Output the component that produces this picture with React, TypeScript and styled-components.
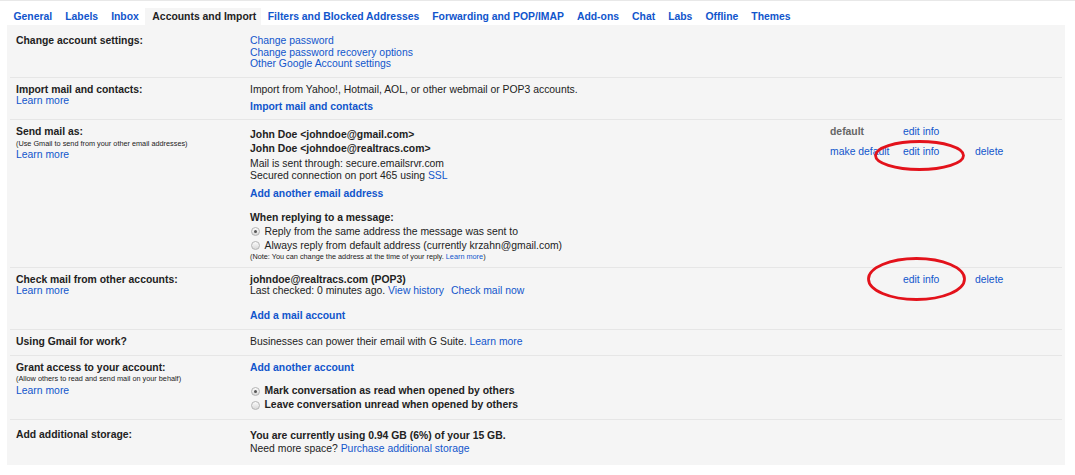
import React from 'react';
import styled, { createGlobalStyle } from 'styled-components';

const GlobalStyle = createGlobalStyle`
  html, body {
    margin: 0;
    padding: 0;
    background: #fff;
  }
  body {
    font-family: 'Liberation Sans', Arial, sans-serif;
    font-size: 10.4px;
    line-height: 11.6px;
    color: #222;
  }
`;

const Page = styled.div`
  border-top: 1px solid #e8e8e8;
  padding: 7px 10px 10px 7px;
`;

const TabBar = styled.nav`
  display: flex;
`;

const Tab = styled.a<{ $active?: boolean }>`
  display: block;
  height: 17px;
  line-height: 17px;
  padding-left: ${(p) => (p.$active ? '7px' : '6.5px')};
  padding-right: ${(p) => (p.$active ? '5px' : '6.5px')};
  font-weight: bold;
  color: ${(p) => (p.$active ? '#222' : '#15c')};
  background: ${(p) => (p.$active ? '#f5f5f5' : 'transparent')};
  text-decoration: none;
  white-space: nowrap;
`;

const Panel = styled.div`
  width: 1058px;
  background: #f5f5f5;
`;

const Row = styled.div<{ $pt?: number; $pb?: number; $last?: boolean }>`
  display: grid;
  grid-template-columns: 240px 1fr;
  margin: 0 3px;
  padding: ${(p) => p.$pt ?? 6}px 0 ${(p) => p.$pb ?? 7}px;
  border-bottom: ${(p) => (p.$last ? 'none' : '1px solid #e6e6e6')};
`;

const Label = styled.div`
  padding-left: 6px;
`;

const Title = styled.div`
  font-weight: bold;
`;

const Small = styled.div<{ $mt?: number }>`
  font-size: 7.3px;
  line-height: 9.5px;
  margin-top: ${(p) => p.$mt ?? 0}px;
  white-space: nowrap;
`;

const Content = styled.div``;

const Line = styled.div<{ $mt?: number; $pt?: number; $lh?: number; $bold?: boolean }>`
  margin-top: ${(p) => p.$mt ?? 0}px;
  padding-top: ${(p) => p.$pt ?? 0}px;
  line-height: ${(p) => p.$lh ?? 11.6}px;
  font-weight: ${(p) => (p.$bold ? 'bold' : 'normal')};
  white-space: nowrap;
`;

const Link = styled.a<{ $bold?: boolean; $gap?: number }>`
  color: #15c;
  text-decoration: none;
  font-weight: ${(p) => (p.$bold ? 'bold' : 'normal')};
  margin-left: ${(p) => p.$gap ?? 0}px;
  cursor: pointer;
`;

const AccountRow = styled.div`
  display: grid;
  grid-template-columns: 580px 73px 72px 1fr;
`;

const Action = styled.div<{ $pt?: number }>`
  padding-top: ${(p) => p.$pt ?? 0}px;
  white-space: nowrap;
`;

const DefaultTag = styled.span`
  font-weight: bold;
  color: #666;
`;

const Circled = styled.span`
  position: relative;
  display: inline-block;
`;

const Mark = styled.svg<{ $x: number; $y: number }>`
  position: absolute;
  left: ${(p) => p.$x}px;
  top: ${(p) => p.$y}px;
  overflow: visible;
  pointer-events: none;
`;

const RadioLine = styled.label<{ $bold?: boolean; $mt?: number }>`
  display: flex;
  align-items: center;
  gap: 5px;
  height: 14px;
  margin-top: ${(p) => p.$mt ?? 0}px;
  font-weight: ${(p) => (p.$bold ? 'bold' : 'normal')};
  white-space: nowrap;
`;

const RadioDot = styled.span<{ $checked?: boolean }>`
  position: relative;
  flex: none;
  width: 9px;
  height: 9px;
  box-sizing: border-box;
  border-radius: 50%;
  border: 1px solid #b4b4b4;
  background: linear-gradient(#fbfbfb, #d8d8d8);
  margin-left: 0.5px;

  &::after {
    content: '';
    display: ${(p) => (p.$checked ? 'block' : 'none')};
    position: absolute;
    left: 2px;
    top: 2px;
    width: 3px;
    height: 3px;
    border-radius: 50%;
    background: #555;
  }
`;

const Ellipse: React.FC<{ x: number; y: number; w: number; h: number }> = ({ x, y, w, h }) => (
  <Mark $x={x} $y={y} width={w} height={h} viewBox={`0 0 ${w} ${h}`}>
    <ellipse cx={w / 2} cy={h / 2} rx={w / 2 - 1.5} ry={h / 2 - 1.5} fill="none" stroke="#e3121b" strokeWidth={2.8} />
  </Mark>
);

const tabs = [
  'General',
  'Labels',
  'Inbox',
  'Accounts and Import',
  'Filters and Blocked Addresses',
  'Forwarding and POP/IMAP',
  'Add-ons',
  'Chat',
  'Labs',
  'Offline',
  'Themes',
];

const App: React.FC = () => (
  <>
    <GlobalStyle />
    <Page>
      <TabBar>
        {tabs.map((t) => (
          <Tab key={t} $active={t === 'Accounts and Import'}>
            {t}
          </Tab>
        ))}
      </TabBar>
      <Panel>
        <Row $pt={10} $pb={7}>
          <Label>
            <Title>Change account settings:</Title>
          </Label>
          <Content>
            <Line><Link>Change password</Link></Line>
            <Line><Link>Change password recovery options</Link></Line>
            <Line><Link>Other Google Account settings</Link></Line>
          </Content>
        </Row>

        <Row>
          <Label>
            <Title>Import mail and contacts:</Title>
            <Line><Link>Learn more</Link></Line>
          </Label>
          <Content>
            <Line>Import from Yahoo!, Hotmail, AOL, or other webmail or POP3 accounts.</Line>
            <Line $mt={5.4}><Link $bold>Import mail and contacts</Link></Line>
          </Content>
        </Row>

        <Row $pb={5}>
          <Label>
            <Title>Send mail as:</Title>
            <Small $mt={1.5}>(Use Gmail to send from your other email addresses)</Small>
            <Line><Link>Learn more</Link></Line>
          </Label>
          <Content>
            <AccountRow>
              <Line $bold $lh={14} $pt={2}>John Doe &lt;johndoe@gmail.com&gt;</Line>
              <Action><DefaultTag>default</DefaultTag></Action>
              <Action><Link>edit info</Link></Action>
              <Action />
            </AccountRow>
            <AccountRow>
              <div>
                <Line $bold $lh={13}>John Doe &lt;johndoe@realtracs.com&gt;</Line>
                <Line $mt={2.5} $lh={12.3}>Mail is sent through: secure.emailsrvr.com</Line>
                <Line $lh={12.3}>Secured connection on port 465 using <Link>SSL</Link></Line>
              </div>
              <Action $pt={4}><Link>make default</Link></Action>
              <Action $pt={4}>
                <Circled>
                  <Link>edit info</Link>
                  <Ellipse x={-29} y={-6} w={91} h={31} />
                </Circled>
              </Action>
              <Action $pt={4}><Link>delete</Link></Action>
            </AccountRow>
            <Line $mt={5.4}><Link $bold>Add another email address</Link></Line>
            <Line $mt={12.8} $bold>When replying to a message:</Line>
            <RadioLine $mt={0.5}>
              <RadioDot $checked />
              Reply from the same address the message was sent to
            </RadioLine>
            <RadioLine>
              <RadioDot />
              Always reply from default address (currently krzahn@gmail.com)
            </RadioLine>
            <Small>
              (Note: You can change the address at the time of your reply. <Link>Learn more</Link>)
            </Small>
          </Content>
        </Row>

        <Row>
          <Label>
            <Title>Check mail from other accounts:</Title>
            <Line><Link>Learn more</Link></Line>
          </Label>
          <Content>
            <AccountRow>
              <div>
                <Line $bold>johndoe@realtracs.com (POP3)</Line>
                <Line>
                  Last checked: 0 minutes ago. <Link>View history</Link>
                  <Link $gap={7}>Check mail now</Link>
                </Line>
              </div>
              <Action />
              <Action>
                <Circled>
                  <Link>edit info</Link>
                  <Ellipse x={-36} y={-17} w={99} h={44} />
                </Circled>
              </Action>
              <Action><Link>delete</Link></Action>
            </AccountRow>
            <Line $mt={13.3}><Link $bold>Add a mail account</Link></Line>
          </Content>
        </Row>

        <Row>
          <Label>
            <Title>Using Gmail for work?</Title>
          </Label>
          <Content>
            <Line>
              Businesses can power their email with G Suite. <Link>Learn more</Link>
            </Line>
          </Content>
        </Row>

        <Row>
          <Label>
            <Title>Grant access to your account:</Title>
            <Small $mt={1.2}>(Allow others to read and send mail on your behalf)</Small>
            <Line $mt={1.4}><Link>Learn more</Link></Line>
          </Label>
          <Content>
            <Line><Link $bold>Add another account</Link></Line>
            <RadioLine $bold $mt={11}>
              <RadioDot $checked />
              Mark conversation as read when opened by others
            </RadioLine>
            <RadioLine $bold>
              <RadioDot />
              Leave conversation unread when opened by others
            </RadioLine>
          </Content>
        </Row>

        <Row $pt={9} $pb={10} $last>
          <Label>
            <Title>Add additional storage:</Title>
          </Label>
          <Content>
            <Line $bold $lh={13}>You are currently using 0.94 GB (6%) of your 15 GB.</Line>
            <Line $lh={13}>
              Need more space? <Link>Purchase additional storage</Link>
            </Line>
          </Content>
        </Row>
      </Panel>
    </Page>
  </>
);

export default App;
